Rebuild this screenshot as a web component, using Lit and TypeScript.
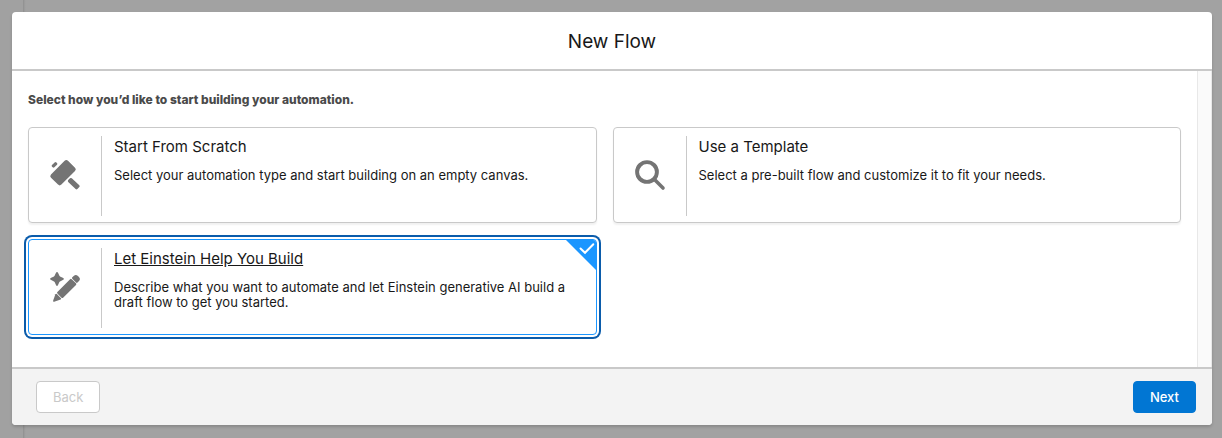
import { LitElement, html, svg, css } from "lit";
import { customElement, property, state } from "lit/decorators.js";
import { classMap } from "lit/directives/class-map.js";

const icons = {
  scratch: svg`
    <path d="M14.6 .8Q16.3 -.8 18 .8L25 7.7Q26.7 9.3 25 11L11.4 24.6Q9.7 26.2 8 24.6L1 17.7Q-.6 16 1 14.4Z"/>
    <path d="M2 5.1L4.6 2.5Q5.5 1.7 6.4 2.5L7 3.1Q7.8 4 7 4.8L4.4 7.3Q3.5 8.1 2.7 7.3L2 6.7Q1.2 5.9 2 5.1Z"/>
    <path d="M18.2 20.1L20 18.3Q20.9 17.5 21.8 18.3L29.3 25.2Q30.2 26.1 29.3 27L27.4 29.1Q26.5 30 25.6 29.1L18.2 21.9Q17.4 21 18.2 20.1Z"/>`,
  search: svg`
    <circle cx="12" cy="12" r="9.9" fill="none" stroke="currentColor" stroke-width="3.9"/>
    <path d="M19.5 19.5L28 28" fill="none" stroke="currentColor" stroke-width="3.6" stroke-linecap="round"/>`,
  einstein: svg`
    <path d="M6.1 .6Q7 -.8 7.9 .6L9.4 3.8Q9.6 4.2 10 4.4L13.3 6Q14.7 6.9 13.3 7.8L10 9.4Q9.6 9.6 9.4 10L7.9 13.2Q7 14.6 6.1 13.2L4.6 10Q4.4 9.6 4 9.4L.7 7.8Q-.7 6.9 .7 6L4 4.4Q4.4 4.2 4.6 3.8Z"/>
    <path d="M20.1 7.2Q20.9 6.4 21.7 7.2L26 11.3Q26.8 12.1 26 12.9L13.1 25.7Q12.3 26.5 11.5 25.7L7.4 21.6Q6.6 20.8 7.4 20Z"/>
    <path d="M22.3 5.2L24 3.7Q25.9 2.1 28 4.1L28.9 5Q30.9 7.1 29 9L27.5 10.6Q26.7 11.3 26 10.6L22.3 6.8Q21.6 6 22.3 5.2Z"/>
    <path d="M5.4 22.3Q5.9 21.3 6.8 22L11 26.2Q11.6 27 10.6 27.5L4.2 29.7Q2.8 30 3.1 28.7Z"/>`,
};

type Choice = {
  id: string;
  icon: keyof typeof icons;
  title: string;
  text: string;
};

const choices: Choice[] = [
  {
    id: "scratch",
    icon: "scratch",
    title: "Start From Scratch",
    text: "Select your automation type and start building on an empty canvas.",
  },
  {
    id: "template",
    icon: "search",
    title: "Use a Template",
    text: "Select a pre-built flow and customize it to fit your needs.",
  },
  {
    id: "einstein",
    icon: "einstein",
    title: "Let Einstein Help You Build",
    text: "Describe what you want to automate and let Einstein generative AI build a draft flow to get you started.",
  },
];

@customElement("choice-card")
export class ChoiceCard extends LitElement {
  @property({ attribute: false }) choice!: Choice;
  @property({ type: Boolean }) selected = false;

  static styles = css`
    :host {
      display: block;
    }
    .card {
      position: relative;
      box-sizing: border-box;
      display: flex;
      height: 100%;
      min-height: 96px;
      padding: 8px 0 6px;
      border: 1px solid #c9c9c9;
      border-radius: 4px;
      background: #fff;
      box-shadow: 0 2px 2px rgba(0, 0, 0, 0.06);
      cursor: pointer;
    }
    .card.selected {
      border-color: #1b96ff;
      box-shadow: 0 0 0 2px #fff, 0 0 0 4px #0b5cab;
    }
    .radio {
      position: absolute;
      inset: 0;
      margin: 0;
      opacity: 0;
      cursor: pointer;
    }
    .figure {
      flex: none;
      display: flex;
      align-items: center;
      justify-content: center;
      width: 72px;
      border-right: 1px solid #c9c9c9;
      color: #747474;
    }
    .icon {
      width: 30px;
      height: 30px;
      margin-bottom: 2px;
      fill: currentColor;
      overflow: visible;
    }
    .body {
      flex: 1;
      padding: 0 24px 0 12px;
      color: #181818;
    }
    .title {
      display: block;
      font-size: 15px;
      line-height: 22px;
    }
    .selected .title {
      text-decoration: underline;
    }
    .text {
      display: block;
      margin-top: 10px;
      font-size: 13px;
      line-height: 15px;
    }
    .mark {
      position: absolute;
      top: 0;
      right: 0;
      width: 30px;
      height: 30px;
      border-top-right-radius: 3px;
    }
  `;

  private pick() {
    this.dispatchEvent(new CustomEvent("pick", { detail: this.choice.id }));
  }

  render() {
    const { id, icon, title, text } = this.choice;
    return html`
      <label class=${classMap({ card: true, selected: this.selected })} for=${id}>
        <input
          class="radio"
          type="radio"
          name="start"
          id=${id}
          .checked=${this.selected}
          @change=${this.pick}
        />
        <span class="figure">
          <svg class="icon" viewBox="0 0 30 30" aria-hidden="true">${icons[icon]}</svg>
        </span>
        <span class="body">
          <span class="title">${title}</span>
          <span class="text">${text}</span>
        </span>
        ${this.selected
          ? html`<svg class="mark" viewBox="0 0 30 30" aria-hidden="true">
              <path d="M0 0H30V30Z" fill="#1b96ff" />
              <path
                d="M14.5 8.5L19 12.8L27.3 4.3"
                fill="none"
                stroke="#fff"
                stroke-width="2"
                stroke-linecap="round"
              />
            </svg>`
          : null}
      </label>
    `;
  }
}

@customElement("app-root")
export class AppRoot extends LitElement {
  @state() private selected = "einstein";

  static styles = css`
    :host {
      box-sizing: border-box;
      display: flex;
      min-height: 100vh;
      padding: 12px 10px 13px 12px;
      font-family: Inter, "Liberation Sans", sans-serif;
      color: #181818;
      background: linear-gradient(90deg, #a1a1a1 23px, #8f8f8f 23px, #9f9f9f 25px, #a2a2a2 26px);
    }
    .modal {
      flex: 1;
      display: flex;
      flex-direction: column;
      border-radius: 4px;
      background: #fff;
      box-shadow: 0 2px 3px rgba(0, 0, 0, 0.16);
      overflow: hidden;
    }
    .header {
      padding: 17px 16px 15px;
      border-bottom: 2px solid #c9c9c9;
      text-align: center;
    }
    .heading {
      margin: 0;
      font-size: 19px;
      font-weight: 400;
      line-height: 25px;
    }
    .main {
      flex: 1;
      display: flex;
    }
    .content {
      flex: 1;
      margin: 0;
      padding: 20px 16px 32px;
      border: 0;
      min-width: 0;
    }
    .prompt {
      margin: 0 0 18px;
      font-size: 12px;
      font-weight: 800;
      line-height: 18px;
      color: #4a4a4a;
    }
    .grid {
      display: grid;
      grid-template-columns: 1fr 1fr;
      gap: 16px;
    }
    .track {
      box-sizing: border-box;
      width: 15px;
      border: solid #e8e8e8;
      border-width: 0 1px;
      background: #fafafa;
    }
    .footer {
      display: flex;
      justify-content: space-between;
      padding: 12px 16px 12px 24px;
      border-top: 2px solid #c9c9c9;
      background: #f3f3f3;
    }
    .button {
      box-sizing: border-box;
      padding: 0 16px;
      border: 1px solid #0176d3;
      border-radius: 4px;
      background: #0176d3;
      color: #fff;
      font: 500 13px/30px Inter, "Liberation Sans", sans-serif;
      cursor: pointer;
    }
    .button:disabled {
      border-color: #c9c9c9;
      background: #fff;
      color: #c9c9c9;
      font-weight: 400;
      cursor: default;
    }
  `;

  render() {
    return html`
      <section class="modal" role="dialog" aria-labelledby="heading">
        <header class="header">
          <h1 class="heading" id="heading">New Flow</h1>
        </header>
        <div class="main">
          <div class="content" role="radiogroup" aria-labelledby="prompt">
            <p class="prompt" id="prompt">Select how you’d like to start building your automation.</p>
            <div class="grid">
              ${choices.map(
                (choice) => html`<choice-card
                  .choice=${choice}
                  .selected=${choice.id === this.selected}
                  @pick=${(e: CustomEvent<string>) => (this.selected = e.detail)}
                ></choice-card>`
              )}
            </div>
          </div>
          <div class="track"></div>
        </div>
        <footer class="footer">
          <button class="button" type="button" disabled>Back</button>
          <button class="button" type="button">Next</button>
        </footer>
      </section>
    `;
  }
}
